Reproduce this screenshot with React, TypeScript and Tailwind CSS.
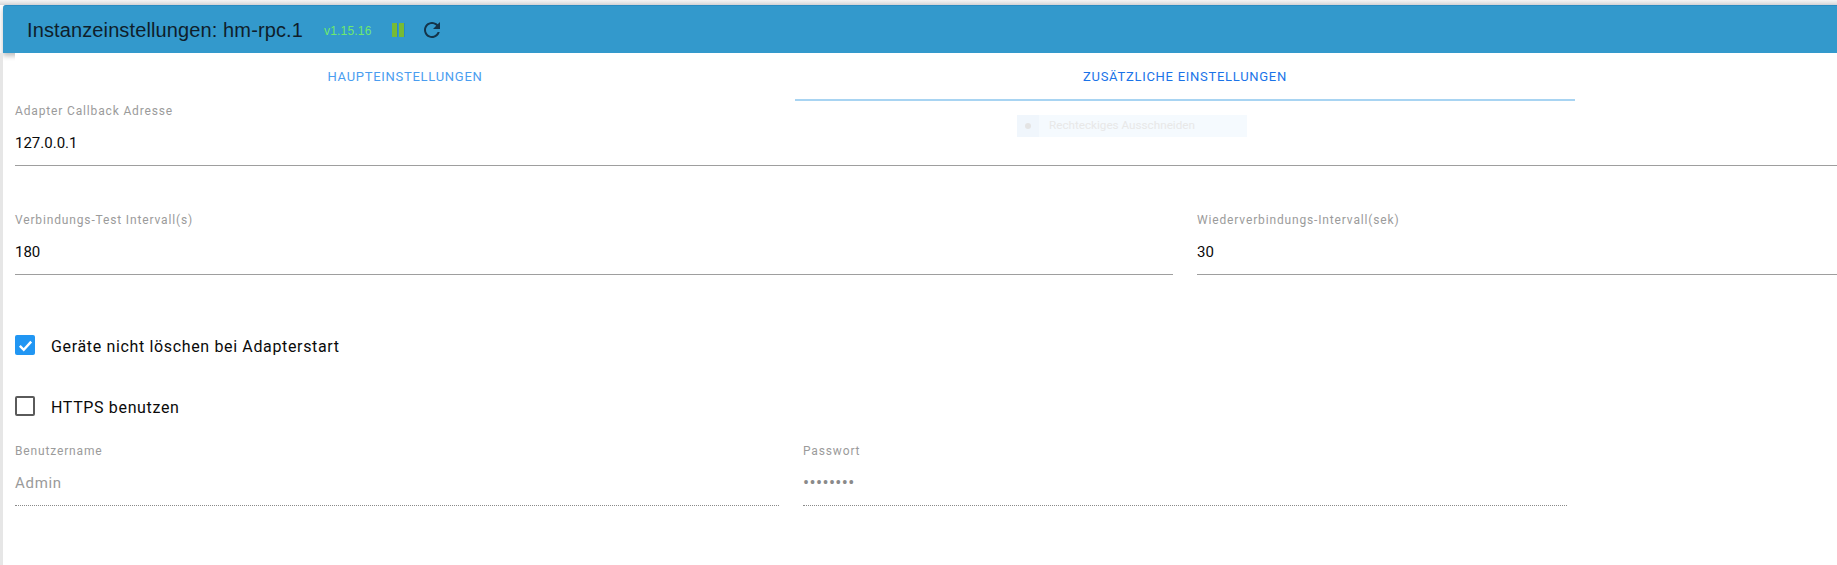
import React from "react";

const labelCls = "block text-[12px] leading-[16px] tracking-[0.85px] text-[#9b9b9b]";

function Field({ label, value, className, dotted, valueCls }: { label: string; value: string; className: string; dotted?: boolean; valueCls: string }) {
  return (
    <div className={className}>
      <span className={labelCls}>{label}</span>
      <div
        className={
          "mt-[12px] h-[35px] border-b leading-[24px] " +
          (dotted ? "border-dotted border-[#8a8a8a] " : "border-solid border-[#9e9e9e] ") +
          valueCls
        }
      >
        {value}
      </div>
    </div>
  );
}

function Check({ checked, label, className }: { checked?: boolean; label: string; className: string }) {
  return (
    <div className={"flex h-[24px] items-center " + className}>
      {checked ? (
        <span className="flex h-[20px] w-[20px] items-center justify-center rounded-[2px] bg-[#2196f3]">
          <svg width="17" height="17" viewBox="0 0 24 24" fill="none" stroke="#fff" strokeWidth="3.4">
            <path d="M4 12.5l5.5 5.5L20 6.5" />
          </svg>
        </span>
      ) : (
        <span className="h-[20px] w-[20px] rounded-[2px] border-2 border-[#5a5a5a]" />
      )}
      <span className="ml-[16px] mt-[4px] text-[16px] leading-[24px] tracking-[0.65px] text-[#0a0a0a]">{label}</span>
    </div>
  );
}

export default function App() {
  return (
    <div className="relative h-[565px] w-[1837px] overflow-hidden bg-white font-['Roboto',sans-serif]">
      <div className="h-[5px] bg-gradient-to-b from-[#f4f4f4] to-[#d8d8da]" />
      <div className="ml-[3px] flex h-[48px] items-center rounded-tl-[3px] border-t border-[#2a8bc2] bg-[#3399cc] pl-[24px] shadow-[0_3px_5px_rgba(0,0,0,0.25)]">
        <span className="font-['Liberation_Sans',sans-serif] text-[20px] tracking-[0.12px] text-[#0f1e2b]">Instanzeinstellungen: hm-rpc.1</span>
        <span className="ml-[21px] mt-[3px] font-['Liberation_Sans',sans-serif] text-[12px] tracking-[0.2px] text-[#6ee86e]">v1.15.16</span>
        <span className="ml-[20px] flex gap-[2px]">
          <span className="h-[14px] w-[5px] bg-[#77bb33] shadow-[1px_0_0_#2a88c4]" />
          <span className="h-[14px] w-[5px] bg-[#77bb33] shadow-[1px_0_0_#2a88c4]" />
        </span>
        <svg className="ml-[16px]" width="24" height="24" viewBox="0 0 24 24" fill="#14344a">
          <path d="M17.65 6.35C16.2 4.9 14.21 4 12 4c-4.42 0-7.99 3.58-7.99 8s3.57 8 7.99 8c3.73 0 6.84-2.55 7.73-6h-2.08c-.82 2.33-3.04 4-5.65 4-3.31 0-6-2.69-6-6s2.69-6 6-6c1.66 0 3.14.69 4.22 1.78L13 11h7V4l-2.35 2.35z" />
        </svg>
      </div>

      <div className="absolute bottom-0 left-0 top-[53px] w-[3px] bg-[#e6e6e6]" />

      <div className="relative ml-[15px] bg-white">
        <div className="flex h-[48px] w-[1560px]">
          <div className="flex w-[780px] items-center justify-center text-[13px] tracking-[0.72px] text-[#4a9df0]">HAUPTEINSTELLUNGEN</div>
          <div className="flex w-[780px] items-center justify-center border-b-2 border-[#a8d4f2] pt-[2px] text-[13px] tracking-[0.72px] text-[#1a73e8]">ZUSÄTZLICHE EINSTELLUNGEN</div>
        </div>

        <Field className="mt-[2px] w-[1822px]" label="Adapter Callback Adresse" value="127.0.0.1" valueCls="text-[15px] text-[#0a0a0a]" />

        <div className="mt-[46px] flex gap-[24px]">
          <Field className="w-[1158px]" label="Verbindungs-Test Intervall(s)" value="180" valueCls="text-[15px] text-[#0a0a0a]" />
          <Field className="w-[640px]" label="Wiederverbindungs-Intervall(sek)" value="30" valueCls="text-[15px] text-[#0a0a0a]" />
        </div>

        <Check className="mt-[58px]" checked label="Geräte nicht löschen bei Adapterstart" />
        <Check className="mt-[37px]" label="HTTPS benutzen" />

        <div className="mt-[25px] flex gap-[24px]">
          <Field dotted className="w-[764px]" label="Benutzername" value="Admin" valueCls="text-[15px] tracking-[0.7px] text-[#9a9a9a]" />
          <Field dotted className="w-[764px]" label="Passwort" value="••••••••" valueCls="text-[18px] tracking-[0.4px] text-[#8a8a8a]" />
        </div>
      </div>

      <div className="absolute left-[1017px] top-[115px] flex h-[22px] w-[230px] items-center bg-[#f5fafe]">
        <span className="flex h-full w-[22px] items-center justify-center bg-[#f0f6fc]">
          <span className="h-[6px] w-[6px] rounded-full bg-[#e4e4e4]" />
        </span>
        <span className="ml-[10px] text-[11.7px] text-[#e8e8e8]">Rechteckiges Ausschneiden</span>
      </div>
    </div>
  );
}
